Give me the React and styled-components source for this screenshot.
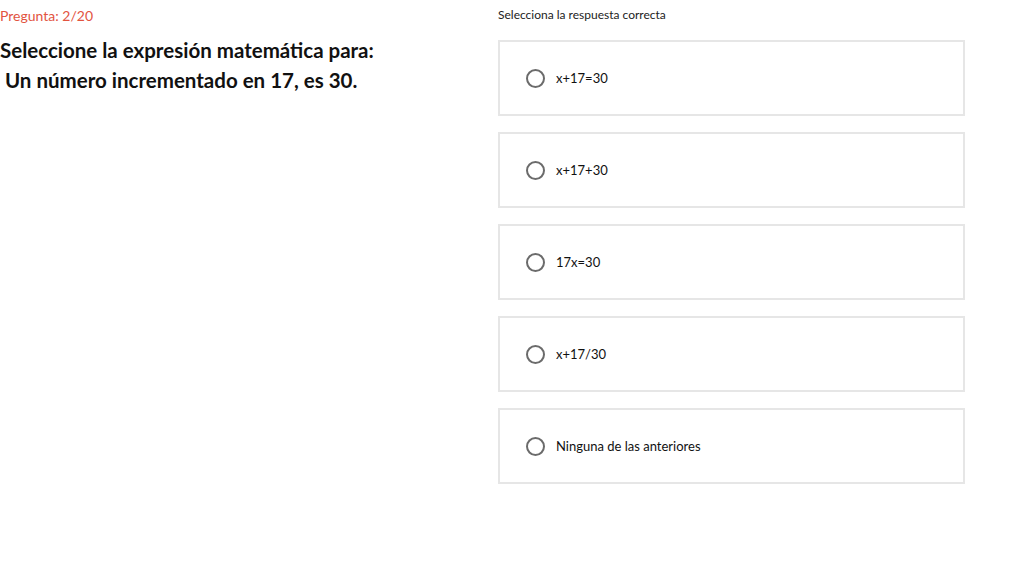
import React from "react";
import styled, { createGlobalStyle } from "styled-components";

const Global = createGlobalStyle`
  html, body { margin: 0; padding: 0; background: #fff; }
  body { font-family: "Lato", "Noto Sans", sans-serif; color: #111; }
`;

const Page = styled.div`
  display: grid;
  grid-template-columns: 498px 467px;
  width: 1010px;
`;

const Left = styled.div`
  display: flex;
  flex-direction: column;
  padding-top: 7px;
`;

const Counter = styled.div`
  color: #e2543f;
  font-size: 14px;
  line-height: 18px;
`;

const Question = styled.h1`
  margin: 10px 0 0 0;
  font-size: 20.5px;
  font-weight: 700;
  line-height: 30px;
  color: #111;
  white-space: pre-wrap;
`;

const Right = styled.div`
  display: flex;
  flex-direction: column;
  padding-top: 8px;
`;

const Hint = styled.div`
  font-size: 12px;
  line-height: 14px;
  color: #222;
  margin-bottom: 18px;
`;

const Options = styled.div`
  display: flex;
  flex-direction: column;
  gap: 16px;
`;

const Option = styled.label`
  display: flex;
  align-items: center;
  gap: 11px;
  height: 76px;
  box-sizing: border-box;
  border: 2px solid #e6e6e6;
  padding-left: 26px;
  cursor: pointer;
`;

const Radio = styled.span`
  width: 15px;
  height: 15px;
  border: 2px solid #6b6b6b;
  border-radius: 50%;
  flex: none;
`;

const OptionText = styled.span`
  font-size: 13px;
  color: #111;
`;

const options = ["x+17=30", "x+17+30", "17x=30", "x+17/30", "Ninguna de las anteriores"];

export default function App() {
  return (
    <>
      <Global />
      <Page>
        <Left>
          <Counter>Pregunta: 2/20</Counter>
          <Question>{"Seleccione la expresión matemática para:\n Un número incrementado en 17, es 30."}</Question>
        </Left>
        <Right>
          <Hint>Selecciona la respuesta correcta</Hint>
          <Options>
            {options.map((o) => (
              <Option key={o}>
                <Radio />
                <OptionText>{o}</OptionText>
              </Option>
            ))}
          </Options>
        </Right>
      </Page>
    </>
  );
}
